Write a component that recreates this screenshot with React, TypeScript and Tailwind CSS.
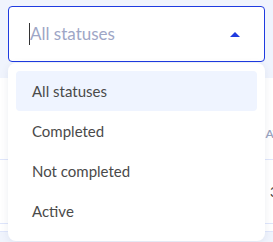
export default function App() {
  const options = ["All statuses", "Completed", "Not completed", "Active"];
  return (
    <div
      className="relative h-[242px] w-[273px] overflow-hidden bg-white"
      style={{ fontFamily: '"Lato", "Noto Sans", sans-serif' }}
    >
      {/* page underneath the dropdown */}
      <div className="absolute inset-0 flex flex-col">
        <div className="h-[78px] bg-[#f0f4fd]" />
        <div className="flex h-[82px] items-end justify-end border-b border-[#dfe6fb] pb-[16px]">
          <span className="mr-[-7px] text-[12px] font-semibold uppercase text-[#9aa3c0]">AT</span>
        </div>
        <div className="flex h-[64px] items-center justify-end border-b border-[#dfe6fb]">
          <span className="mr-[-5px] text-sm text-[#444]">3</span>
        </div>
        <div className="h-[8px] border-b border-[#dfe6fb]" />
        <div className="flex-1 bg-[#f0f4fd]" />
      </div>

      <div className="relative flex flex-col px-2 pt-[6px]">
        <div className="flex h-[56px] items-center rounded-[4px] border border-[#1f3be0] bg-white pl-[20px] pr-[24px]">
          <span className="h-[22px] w-px bg-[#333]" />
          <span className="flex-1 text-[17px] text-[#9ea6c6]">All statuses</span>
          <span className="h-0 w-0 border-x-[5px] border-b-[5px] border-x-transparent border-b-[#1f3be0]" />
        </div>
        <div className="mt-[1px] flex flex-col rounded-lg bg-white px-2 pb-[10px] pt-2 shadow-[0_2px_8px_rgba(30,40,90,0.08)]">
          {options.map((o, i) => (
            <div
              key={o}
              className={`flex h-[40px] items-center rounded-[4px] px-4 text-[15px] text-[#4a4a4a] ${i === 0 ? "bg-[#eff4ff]" : ""}`}
            >
              {o}
            </div>
          ))}
        </div>
      </div>
    </div>
  );
}
